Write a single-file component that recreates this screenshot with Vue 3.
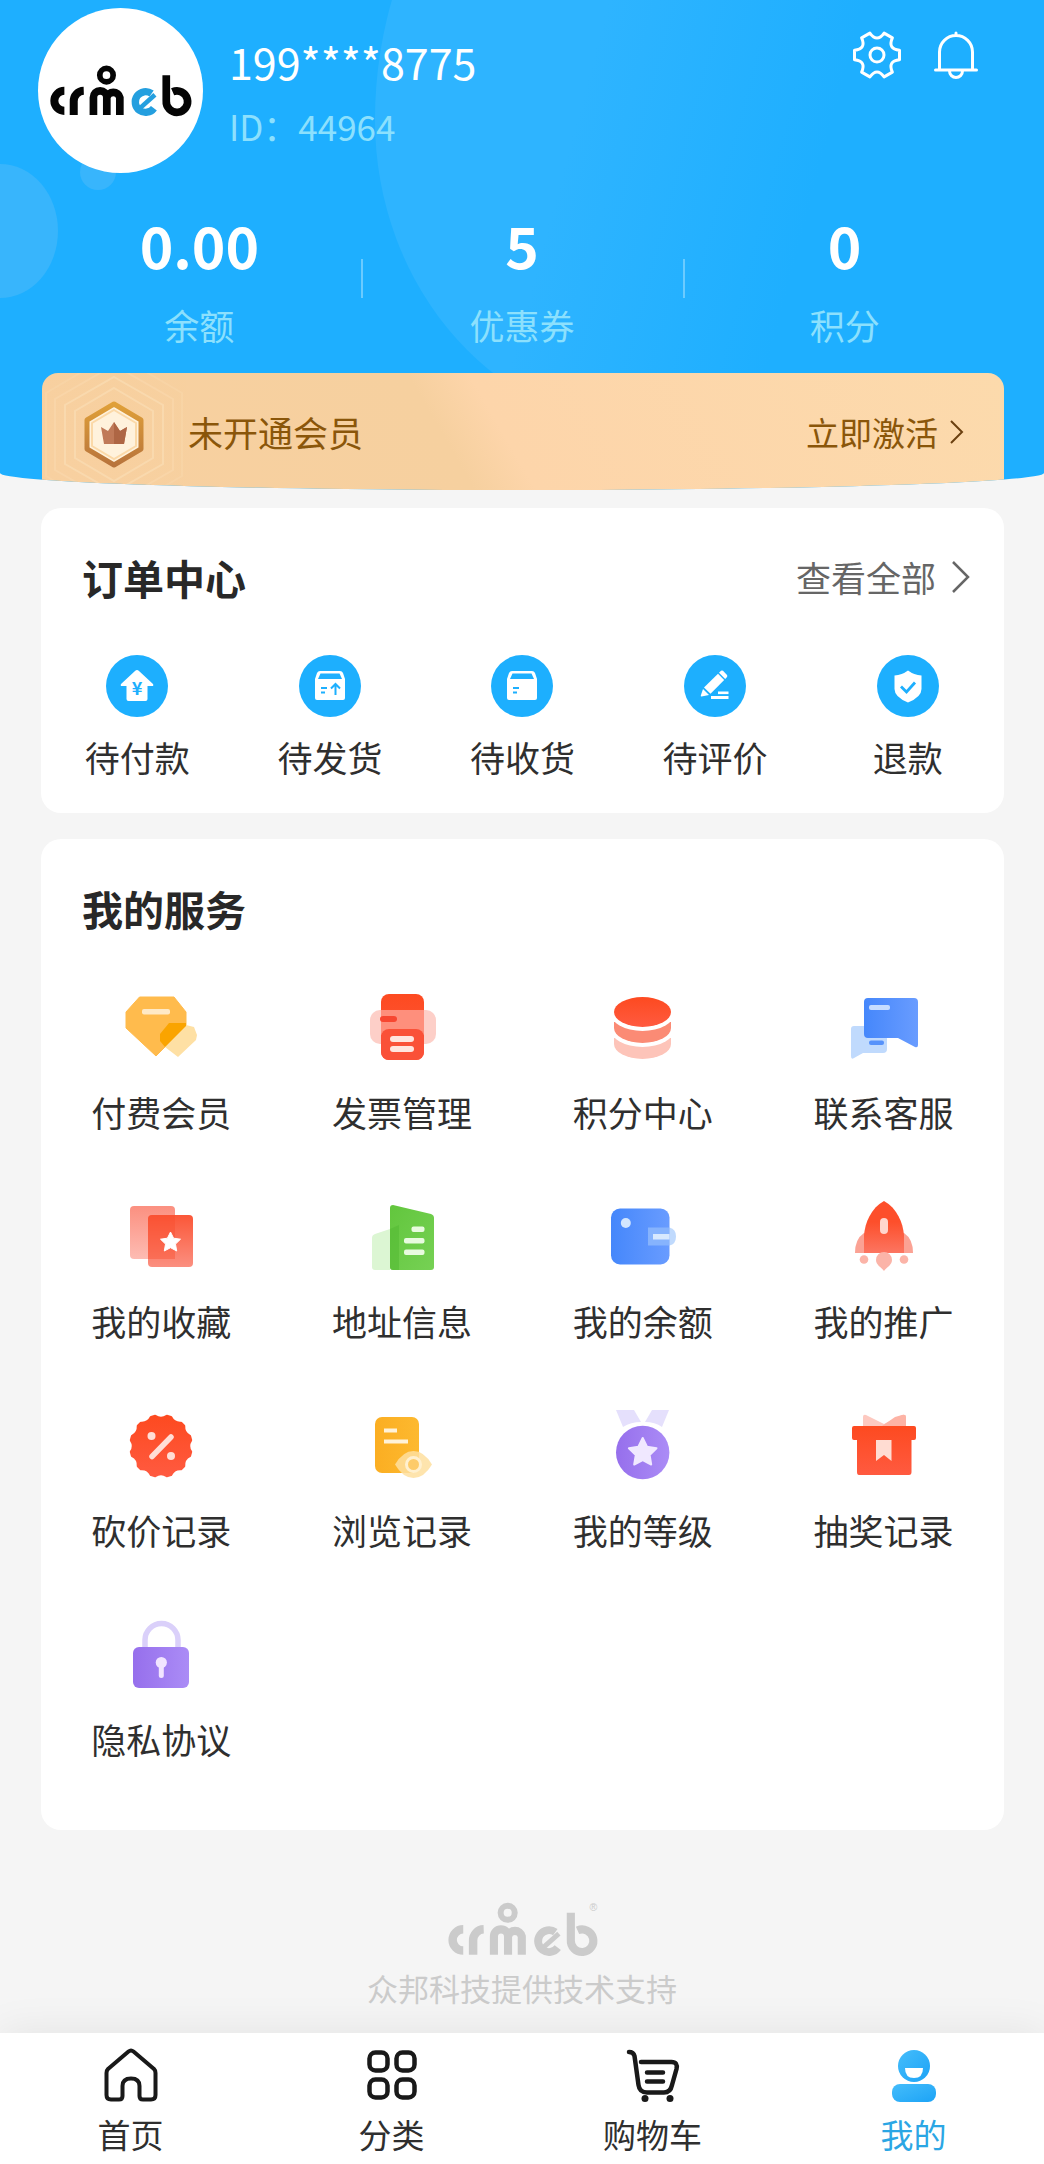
<script setup>
// Points on a circle, used to build the gear and the scalloped badge
const polar = (c, r, deg) => {
  const a = (deg * Math.PI) / 180
  return `${(c + r * Math.cos(a)).toFixed(2)} ${(c + r * Math.sin(a)).toFixed(2)}`
}

const gearPath =
  [0, 60, 120, 180, 240, 300]
    .map((a, i) => `${i ? 'L' : 'M'}${polar(25, 23, a - 12)}L${polar(25, 23, a + 12)}Q${polar(25, 12, a + 30)} ${polar(25, 23, a + 48)}`)
    .join('') + 'Z'

const badgePath =
  Array.from({ length: 12 }, (_, i) => i * 30 + 15)
    .map((a, i) => `${i ? 'L' : 'M'}${polar(36, 30.5, a - 4)}L${polar(36, 30.5, a + 4)}Q${polar(36, 26, a + 15)} ${polar(36, 30.5, a + 26)}`)
    .join('') + 'Z'

const logoStrokes = [
  { d: 'M196 260A30 30 0 0 0 196 320', w: 24 },
  { d: 'M224 332V292A31 31 0 0 1 254 260', w: 24 },
  { d: 'M283 332V280A20 20 0 0 1 323 280V332M323 280A20 20 0 0 1 362 280V332', w: 23 },
  { d: 'M302 213A20 20 0 1 1 342 213A20 20 0 1 1 302 213', w: 17 },
  { d: 'M457 268A31 31 0 1 0 464 312', w: 22, accent: true },
  { d: 'M420 314L467 272', w: 14, accent: true },
  { d: 'M501 213V290A32 32 0 1 0 520 263', w: 23 },
]

const stats = [
  { value: '0.00', label: '余额' },
  { value: '5', label: '优惠券' },
  { value: '0', label: '积分' },
]

const carton =
  '<path d="M21 16H41Q43 16 44 18L46 24V43Q46 45 44 45H18Q16 45 16 43V24L18 18Q19 16 21 16Z" fill="#fff"/><path d="M21.500 18.500H40.500L43 24H19Z" fill="#1daffe"/><path d="M22 33H28M22 37.500H26" stroke="#1daffe" stroke-width="1.800"/>'

const orders = [
  {
    label: '待付款',
    icon: '<path d="M29 16Q31 14 33 16L47 29Q48 31 46 31H41.500V44Q41.500 46 39.500 46H22.500Q20.500 46 20.500 44V31H16Q14 31 15 29Z" fill="#fff"/><text x="31" y="39.500" text-anchor="middle" font-size="18" font-weight="700" font-family="Noto Sans CJK SC, sans-serif" fill="#1daffe">¥</text>',
  },
  {
    label: '待发货',
    icon: carton + '<path d="M36.500 40V29M32 33.500L36.500 29L41 33.500" fill="none" stroke="#1daffe" stroke-width="2"/>',
  },
  { label: '待收货', icon: carton },
  {
    label: '待评价',
    icon: '<g fill="#fff"><path d="M19 34L25 40L17.500 41.500Q16.500 41.500 16.800 40.500Z"/><path d="M20 32.500L34 18.800L40.200 25L26.500 38.800Z"/><path d="M35 17.800L37 15.800Q38 15 39 15.800L43 20Q43.600 21 43 22L41.200 24Z"/><rect x="34" y="36.500" width="10.500" height="2.600"/><rect x="27" y="41" width="17.500" height="3"/></g>',
  },
  {
    label: '退款',
    icon: '<path d="M31 15.500Q37 20 44.500 20.500V34Q44.500 42 31 47.500Q17.500 42 17.500 34V20.500Q25 20 31 15.500Z" fill="#fff"/><path d="M24 31.500L29.500 37L38 27.500" fill="none" stroke="#1daffe" stroke-width="2.800"/>',
  },
]

const services = [
  {
    label: '付费会员',
    icon: '<path d="M14.500 5H49L61 20V34L31 64L1 36V20Z" fill="#ffbb4d" stroke="#ffbb4d" stroke-linejoin="round"/><path d="M61 33L69 35L72 43L71 48L53 65L40 55Z" fill="#fee0a4"/><path d="M35 42L44 31H61V34L40 55L35 49Z" fill="#faa400"/><rect x="17" y="17" width="28" height="5.500" rx="2" fill="#ffe9c6"/>',
  },
  {
    label: '发票管理',
    icon: '<rect x="4" y="18" width="66" height="34" rx="10" fill="#fdcfc8"/><rect x="15" y="2" width="43" height="66" rx="8" fill="url(#redDeep)"/><rect x="15" y="18" width="43" height="25" fill="#fe8f7c"/><rect x="14" y="24" width="17" height="6" rx="3" fill="#f74731"/><rect x="15" y="37" width="43" height="31" rx="8" fill="#fa5138"/><rect x="24" y="44" width="24" height="6" rx="3" fill="#ffe5df"/><rect x="24" y="54" width="24" height="6" rx="3" fill="#ffe5df"/>',
  },
  {
    label: '积分中心',
    icon: '<path d="M7 46V52A28.500 15 0 0 0 64 52V46Z" fill="#fdc4b9"/><ellipse cx="35.500" cy="36" rx="32.500" ry="19" fill="#fff"/><path d="M7 30V36A28.500 15 0 0 0 64 36V30Z" fill="#fb8b75"/><ellipse cx="35.500" cy="20" rx="32.500" ry="19" fill="#fff"/><ellipse cx="35.500" cy="20" rx="28.500" ry="15" fill="url(#redDeep)"/>',
  },
  {
    label: '联系客服',
    icon: '<path d="M6 34H35Q39 34 39 38V57Q39 61 35 61H15L6 66Q3 68 3 64V37Q3 34 6 34Z" fill="#c0dafd"/><path d="M20 6H66Q70 6 70 10V53Q70 56 67 55L50 46H20Q16 46 16 42V10Q16 6 20 6Z" fill="url(#blueAcross)"/><rect x="21" y="13" width="21" height="5" rx="2" fill="#c6ddff"/><rect x="21" y="48.500" width="15" height="4.500" rx="2" fill="#5692fb"/>',
  },
  {
    label: '我的收藏',
    icon: '<rect x="5" y="5" width="45" height="53" rx="4" fill="url(#redPale)"/><rect x="23" y="14" width="45" height="52" rx="4" fill="url(#redFade)"/><path d="M23 18Q23 14 27 14H50V58H23Z" fill="#fa4a2b" opacity=".4"/><path d="M45.500 31L48.600 37.200L55.500 38.200L50.500 43.100L51.700 50L45.500 46.700L39.300 50L40.500 43.100L35.500 38.200L42.400 37.200Z" fill="#fff" stroke="#fff" stroke-linejoin="round"/>',
  },
  {
    label: '地址信息',
    icon: '<path d="M24 28L9 33Q6 34 6 37V66Q6 69 9 69H24Z" fill="#dcf6d3"/><path d="M27 4L65 13Q68 14 68 17V66Q68 69 65 69H27Q24 69 24 66V7Q24 4 27 4Z" fill="url(#green)"/><path d="M24 28L33 24V69H27Q24 69 24 66Z" fill="#55bb35" opacity=".6"/><g fill="#e8fbdf"><rect x="45.500" y="25.500" width="13" height="5.500" rx="2"/><rect x="38" y="37" width="20.500" height="5.500" rx="2"/><rect x="38" y="48.500" width="20.500" height="5.500" rx="2"/></g>',
  },
  {
    label: '我的余额',
    icon: '<rect x="4" y="7.500" width="58.500" height="56" rx="9" fill="url(#blueAcross)"/><circle cx="18.800" cy="22" r="5" fill="#d3e6fe"/><path d="M62.500 26.500Q69 28 69 35.500Q69 43 62.500 44.500Z" fill="#c0dafd"/><path d="M41 26.500H62.500V44.500H41Z" fill="#86b3fd"/><path d="M46 33H62.500V38.500H46Z" fill="#d8e9fe"/>',
  },
  {
    label: '我的推广',
    icon: '<path d="M16 32Q7 38 7 52H65Q65 38 56 32Z" fill="#fba294"/><path d="M36 0C49 7 55 22 56 34V52H16V34C17 22 23 7 36 0Z" fill="url(#redFade2)"/><rect x="32" y="17" width="8" height="16" rx="4" fill="#ffd6cd"/><g fill="#fbb4a8"><circle cx="16" cy="58.500" r="4.300"/><circle cx="56" cy="58.500" r="4.300"/><path d="M28 59A8 8 0 0 1 44 59C44 64 39 66 36 70C33 66 28 64 28 59Z"/></g>',
  },
  {
    label: '砍价记录',
    icon: `<path d="${badgePath}" fill="url(#redDeep)" stroke="url(#redDeep)" stroke-width="2.500" stroke-linejoin="round"/><path d="M27 46.500L46 27" stroke="#ffded6" stroke-width="5.500" stroke-linecap="round"/><circle cx="26.500" cy="26" r="4" fill="#ffded6"/><circle cx="46" cy="46" r="4" fill="#ffded6"/>`,
  },
  {
    label: '浏览记录',
    icon: '<rect x="9" y="7" width="44" height="56" rx="7" fill="url(#amber)"/><path d="M18 20.500H31M18 31.500H42" stroke="#fff2d8" stroke-width="4"/><path d="M29 54.500Q37 41 47.500 41Q58 41 66 54.500Q58 68 47.500 68Q37 68 29 54.500Z" fill="#fedf9f" opacity=".85"/><circle cx="47.500" cy="54.500" r="7" fill="#fdcb69" stroke="#fff0cf" stroke-width="3"/>',
  },
  {
    label: '我的等级',
    icon: '<path d="M9 0H27L34 12Q24 12 16 17ZM62 0H45L38 12Q48 12 55 17Z" fill="#e5e0fc"/><circle cx="35.700" cy="42.500" r="26.700" fill="url(#violet)"/><path d="M35.700 28L40 36.800L49.500 38.200L42.600 45L44.200 54.500L35.700 50L27.200 54.500L28.800 45L21.900 38.200L31.400 36.800Z" fill="#f0e8ff" stroke="#f0e8ff" stroke-width="2" stroke-linejoin="round"/>',
  },
  {
    label: '抽奖记录',
    icon: '<path d="M15 7Q15 4 18 5L36 14L54 5Q58 4 58 7V17H15Z" fill="#fdc9c0"/><path d="M34 16L47 7L54 5Q58 4 58 7V17Z" fill="#fdb3a5"/><path d="M6 16H66Q68 16 68 18V28Q68 30 66 30H63.500V62Q63.500 65 61 65H11Q9 65 9 62V30H6Q4 30 4 28V18Q4 16 6 16Z" fill="url(#redDeep)"/><path d="M28 30H43.500V51L36 45L28 51Z" fill="#ffdcd2"/>',
  },
  {
    label: '隐私协议',
    icon: '<path d="M20 30V21A16.300 16.300 0 0 1 53 21V30" fill="none" stroke="#dad0fa" stroke-width="5.500"/><rect x="8" y="28" width="56" height="41" rx="6" fill="url(#violet)"/><circle cx="36.300" cy="43.500" r="5.600" fill="#f1e4ff"/><path d="M36.300 45V56.500" stroke="#f1e4ff" stroke-width="5" stroke-linecap="round"/>',
  },
]

const tabs = [
  {
    label: '首页',
    icon: '<path d="M24.500 3.500Q27 1.500 29.500 3.500L50 21Q51.500 22.500 51.500 25V47Q51.500 51.500 47 51.500H39Q35.500 51.500 35.500 48V38Q35.500 30.500 27 30.500Q18.500 30.500 18.500 38V48Q18.500 51.500 15 51.500H7Q2.500 51.500 2.500 47V25Q2.500 22.500 4 21Z"/>',
  },
  {
    label: '分类',
    icon: '<g stroke-width="4.500"><rect x="4.500" y="4.500" width="18" height="18" rx="6"/><rect x="31.500" y="4.500" width="18" height="18" rx="6"/><rect x="4.500" y="31.500" width="18" height="18" rx="6"/><rect x="31.500" y="31.500" width="18" height="18" rx="6"/></g>',
  },
  {
    label: '购物车',
    icon: '<path d="M3 4Q7.500 4 8.500 8L12.500 37Q13.500 44.500 21 44.500H38Q44.500 44.500 46 37L50.500 21Q52 14 45.500 14H15M21 24.500H37M21 33.500H37" stroke-width="4.500" stroke-linecap="round"/><circle cx="19" cy="50.500" r="3.500" fill="#191919" stroke="none"/><circle cx="44" cy="50.500" r="3.500" fill="#191919" stroke="none"/>',
  },
  {
    label: '我的',
    active: true,
    icon: '<circle cx="27" cy="18" r="16" fill="url(#meBlue)" stroke="none"/><path d="M18 20H36Q36 30 27 30Q18 30 18 20Z" fill="#fff" stroke="none"/><rect x="5" y="36" width="44" height="18" rx="8" fill="url(#meBlue)" stroke="none"/>',
  },
]
</script>

<template>
  <div class="page">
    <svg class="defs" width="0" height="0" aria-hidden="true">
      <defs>
        <linearGradient id="redDeep" x1="0" y1="0" x2="0" y2="1"><stop offset="0" stop-color="#fd4a20" /><stop offset="1" stop-color="#ff5a40" /></linearGradient>
        <linearGradient id="redPale" x1="0" y1="0" x2="0" y2="1"><stop offset="0" stop-color="#fb9080" /><stop offset="1" stop-color="#fdbcb3" /></linearGradient>
        <linearGradient id="redFade" x1="0" y1="0" x2="0" y2="1"><stop offset="0" stop-color="#fb5738" /><stop offset="1" stop-color="#fb8f80" /></linearGradient>
        <linearGradient id="redFade2" x1="0" y1="0" x2="0" y2="1"><stop offset="0.4" stop-color="#fd4f2b" /><stop offset="1" stop-color="#fc7561" /></linearGradient>
        <linearGradient id="blueAcross" x1="0" y1="0" x2="1" y2="0"><stop offset="0" stop-color="#4587fb" /><stop offset="1" stop-color="#699cff" /></linearGradient>
        <linearGradient id="green" x1="0" y1="0" x2="1" y2="1"><stop offset="0" stop-color="#62c63d" /><stop offset="1" stop-color="#76d154" /></linearGradient>
        <linearGradient id="amber" x1="0" y1="0" x2="1" y2="0"><stop offset="0" stop-color="#fbae22" /><stop offset="1" stop-color="#fdb92f" /></linearGradient>
        <linearGradient id="violet" x1="0" y1="0" x2="1" y2="0"><stop offset="0" stop-color="#966fec" /><stop offset="1" stop-color="#ab8cf6" /></linearGradient>
        <linearGradient id="meBlue" x1="0" y1="0" x2="1" y2="1"><stop offset="0" stop-color="#45bdfb" /><stop offset="1" stop-color="#1ca3f6" /></linearGradient>
        <linearGradient id="gold" x1="0" y1="0" x2="0" y2="1"><stop offset="0" stop-color="#e0a038" /><stop offset="1" stop-color="#b8743c" /></linearGradient>
      </defs>
    </svg>

    <header class="hero">
      <span class="bubble bubble-left"></span>
      <span class="bubble bubble-small"></span>
      <span class="bubble bubble-big"></span>

      <div class="profile">
        <div class="avatar">
          <svg width="143" height="51" viewBox="150 183 428 152" role="img" aria-label="crmeb">
            <path v-for="s in logoStrokes" :key="s.d" :d="s.d" fill="none" :stroke="s.accent ? '#249fdf' : '#050505'" :stroke-width="s.w" />
          </svg>
        </div>
        <div class="who">
          <h1 class="phone">199****8775</h1>
          <p class="uid">ID：44964</p>
        </div>
        <div class="tools">
          <button type="button" aria-label="设置">
            <svg width="50" height="50" viewBox="0 0 50 50" fill="none" stroke="#fff" stroke-width="3" stroke-linejoin="round"><path :d="gearPath" /><circle cx="25" cy="25" r="7" /></svg>
          </button>
          <button type="button" aria-label="消息">
            <svg width="50" height="50" viewBox="0 0 50 50" fill="none" stroke="#fff" stroke-width="3" stroke-linecap="round"><path d="M8.500 39V22A16.500 16.500 0 0 1 41.500 22V39M4.500 40H45.500M25 3V5M18.500 41A6.500 6.500 0 0 0 31.500 41" /></svg>
          </button>
        </div>
      </div>

      <ul class="stats">
        <li v-for="s in stats" :key="s.label">
          <strong>{{ s.value }}</strong>
          <span>{{ s.label }}</span>
        </li>
      </ul>

      <a class="member" href="#">
        <svg class="emblem" width="146" height="117" viewBox="0 0 146 117" fill="none" aria-hidden="true">
          <g stroke="#fbe0b8" stroke-width="2" opacity=".6">
            <path d="M72 15L111 38V85L72 108L33 85V38Z" />
            <path d="M72 4L121 32V91L72 119L23 91V32Z" />
            <path d="M72 -8L131 26V97L72 131L13 97V26Z" opacity=".6" />
            <path d="M72 -20L140 20V103L72 143L4 103V20Z" opacity=".4" />
          </g>
          <path d="M72 31L99 47V76L72 92L45 76V47Z" fill="#fff2dc" stroke="url(#gold)" stroke-width="5" stroke-linejoin="round" />
          <path d="M72 37L94 50V73L72 86L50 73V50Z" stroke="#fbd9a8" stroke-width="2" />
          <path d="M59 54L66 58L72 49L78 58L85 54L82 71H62Z" fill="#c07a58" />
          <path d="M72 49L78 58L85 54L82 71H72Z" fill="#ae6644" />
        </svg>
        <span class="member-title">未开通会员</span>
        <span class="member-action">立即激活</span>
        <svg width="14" height="24" viewBox="0 0 14 24" fill="none" stroke="#6b4010" stroke-width="2" aria-hidden="true"><path d="M1 1L12 12L1 23" /></svg>
      </a>
    </header>

    <main class="content">
      <section class="card orders">
        <div class="card-head">
          <h2>订单中心</h2>
          <a href="#">查看全部<svg width="18" height="32" viewBox="0 0 18 32" fill="none" stroke="#666" stroke-width="2.5" aria-hidden="true"><path d="M1 1L16 16L1 31" /></svg></a>
        </div>
        <nav class="order-grid">
          <a v-for="o in orders" :key="o.label" href="#">
            <span class="order-icon"><svg width="62" height="62" viewBox="0 0 62 62" aria-hidden="true" v-html="o.icon"></svg></span>
            {{ o.label }}
          </a>
        </nav>
      </section>

      <section class="card services">
        <div class="card-head"><h2>我的服务</h2></div>
        <nav class="service-grid">
          <a v-for="s in services" :key="s.label" href="#">
            <svg width="72" height="72" viewBox="0 0 72 72" aria-hidden="true" v-html="s.icon"></svg>
            {{ s.label }}
          </a>
        </nav>
      </section>
    </main>

    <footer class="support">
      <svg width="151" height="54" viewBox="150 183 428 152" role="img" aria-label="crmeb">
        <path v-for="s in logoStrokes" :key="s.d" :d="s.d" fill="none" stroke="#cbcbcb" :stroke-width="s.w" />
        <text x="554" y="208" font-size="30" font-family="Liberation Sans, sans-serif" fill="#cbcbcb">®</text>
      </svg>
      <p>众邦科技提供技术支持</p>
    </footer>

    <nav class="tabbar">
      <a v-for="t in tabs" :key="t.label" href="#" :class="{ active: t.active }">
        <svg width="54" height="54" viewBox="0 0 54 54" fill="none" stroke="#191919" stroke-width="4" stroke-linejoin="round" aria-hidden="true" v-html="t.icon"></svg>
        {{ t.label }}
      </a>
    </nav>
  </div>
</template>

<style>
body {
  margin: 0;
  background: #f5f5f5;
}
</style>

<style scoped>
.page {
  display: flex;
  flex-direction: column;
  min-height: 100vh;
  background: #f5f5f5;
  color: #2f2f2f;
  font-family: "Noto Sans CJK SC", sans-serif;
  font-size: 35px;
  line-height: 48px;
}
.page a {
  color: inherit;
  text-decoration: none;
}
h1,
h2,
p,
ul {
  margin: 0;
  padding: 0;
}
.defs {
  position: absolute;
}
.page svg {
  flex: none;
  overflow: visible;
}

.hero {
  position: relative;
  overflow: hidden;
  padding: 8px 38px 0;
  background: #1eafff;
  border-radius: 0 0 50% 50% / 0 0 17px 17px;
}
.bubble {
  position: absolute;
  border-radius: 50%;
}
.bubble-left {
  left: -58px;
  top: 164px;
  width: 116px;
  height: 134px;
  background: #38b5fc;
}
.bubble-small {
  left: 80px;
  top: 154px;
  width: 36px;
  height: 36px;
  background: #38b5fc;
}
.bubble-big {
  left: 375px;
  top: -230px;
  width: 560px;
  height: 660px;
  border-radius: 280px / 350px 350px 310px 310px;
  background: linear-gradient(105deg, #2eb4ff 40%, #1eafff 75%);
}

.profile {
  position: relative;
  display: flex;
  align-items: flex-start;
}
.avatar {
  display: flex;
  flex: none;
  align-items: center;
  justify-content: center;
  width: 165px;
  height: 165px;
  border-radius: 50%;
  background: #fff;
}
.who {
  flex: 1;
  padding: 21px 0 0 26px;
}
.phone {
  color: #fff;
  font-size: 43px;
  font-weight: 400;
  line-height: 64px;
}
.uid {
  padding-top: 9px;
  color: #8ce0fd;
}
.tools {
  display: flex;
  gap: 29px;
  padding: 22px 25px 0 0;
}
.tools button {
  display: flex;
  padding: 0;
  border: 0;
  background: none;
}

.stats {
  position: relative;
  display: flex;
  padding: 36px 0 24px;
  list-style: none;
}
.stats li {
  display: flex;
  flex: 1;
  flex-direction: column;
  align-items: center;
  gap: 22px;
  position: relative;
}
.stats li + li::before {
  content: "";
  position: absolute;
  left: 0;
  top: 50px;
  width: 2px;
  height: 39px;
  background: #6bcbff;
}
.stats strong {
  color: #fff;
  font-size: 57px;
  font-weight: 700;
  line-height: 70px;
}
.stats span {
  color: #8ce0fd;
}

.member {
  position: relative;
  display: flex;
  align-items: center;
  overflow: hidden;
  height: 117px;
  margin: 0 2px 0 4px;
  padding-right: 40px;
  border-radius: 16px 16px 0 0;
  background: linear-gradient(60deg, #f8d0a0, #f6d09f 42%, #fdd5aa 48%, #fcdaac);
}
.page .member {
  color: #8a560a;
}
.member-title {
  flex: 1;
}
.member-action {
  margin-right: 12px;
  font-size: 33px;
}

.content {
  display: flex;
  flex-direction: column;
  gap: 26px;
  padding: 18px 40px 0 41px;
}
.card {
  border-radius: 20px;
  background: #fff;
}
.card-head {
  display: flex;
  align-items: center;
  justify-content: space-between;
  padding: 45px 34px 0 41px;
}
.card-head h2 {
  color: #282828;
  font-size: 41px;
  font-weight: 700;
}
.page .card-head a {
  display: flex;
  align-items: center;
  gap: 16px;
  color: #666;
}
.order-grid {
  display: grid;
  grid-template-columns: repeat(5, 1fr);
  padding: 54px 0 32px;
}
.order-grid a,
.service-grid a {
  display: flex;
  flex-direction: column;
  align-items: center;
}
.order-grid a {
  gap: 16px;
}
.order-icon {
  display: flex;
  border-radius: 50%;
  background: #1daffe;
}
.service-grid {
  display: grid;
  grid-template-columns: repeat(4, 1fr);
  row-gap: 65px;
  padding: 60px 0 67px;
}
.service-grid a {
  gap: 24px;
}

.support {
  display: flex;
  flex-direction: column;
  align-items: center;
  gap: 8px;
  padding: 72px 0 18px;
  color: #cbcbcb;
  font-size: 31px;
}
.tabbar {
  display: grid;
  grid-template-columns: repeat(4, 1fr);
  margin-top: auto;
  padding: 15px 0 6px;
  background: #fff;
  box-shadow: 0 0 40px rgba(0, 0, 0, 0.08);
}
.tabbar a {
  display: flex;
  flex-direction: column;
  align-items: center;
  gap: 8px;
  font-size: 33px;
}
.page .tabbar .active {
  color: #2ba6e4;
}
</style>
